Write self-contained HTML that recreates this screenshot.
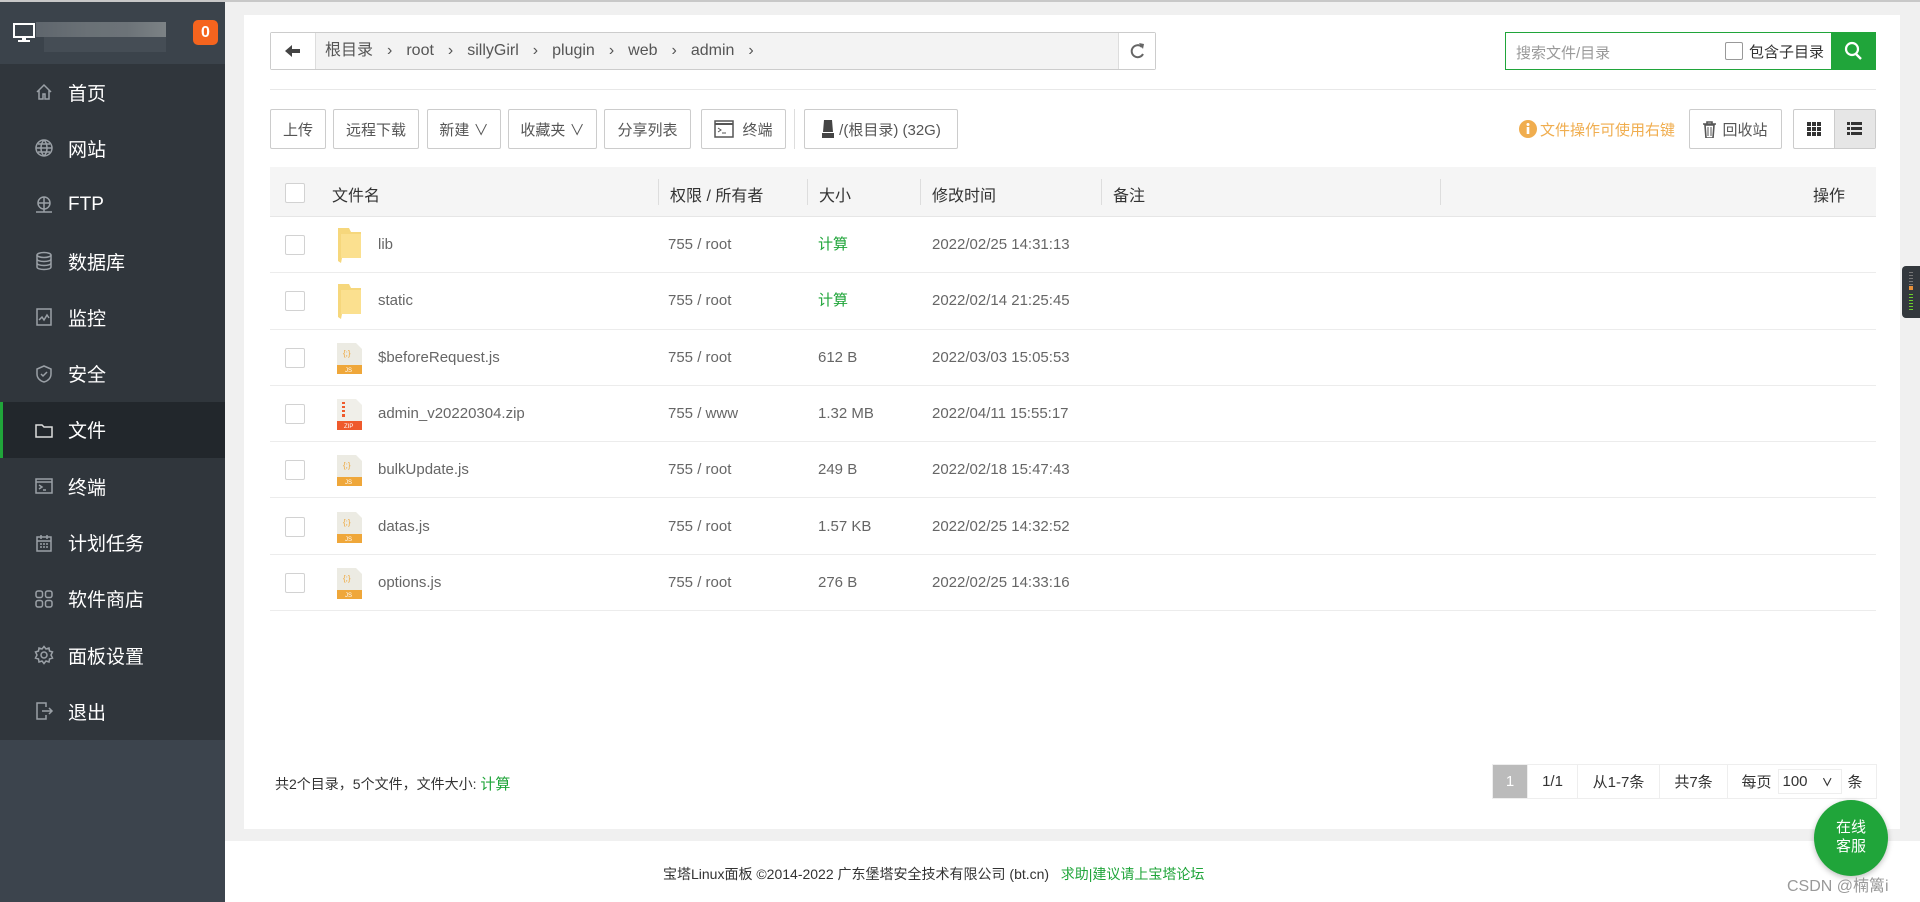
<!DOCTYPE html>
<html><head><meta charset="utf-8"><style>
*{box-sizing:border-box;margin:0;padding:0}
body{width:1920px;height:902px;overflow:hidden;background:#f0f0f0;font-family:"Liberation Sans","Noto Sans CJK SC",sans-serif;color:#555;position:relative}
.topline{position:absolute;left:0;top:0;width:1920px;height:2px;background:#c8c8c8;z-index:5}
.side{position:absolute;left:0;top:0;width:225px;height:902px;background:#3c444d}
.shead{position:absolute;left:0;top:0;width:225px;height:64px;background:#3b434b}
.menu{position:absolute;left:0;top:64px;width:225px;height:676px;background:#30363c}
.mi{height:56.3px;display:flex;align-items:center;padding-left:34px;color:#fff;font-size:19px;position:relative}
.mi svg{width:20px;height:20px;margin-right:14px;stroke:#9aa0a6;fill:none;stroke-width:1.5}
.mi.act{background:#22272c}
.mi.act:before{content:"";position:absolute;left:0;top:0;bottom:0;width:3px;background:#20a53a}
.panel{position:absolute;left:244px;top:15px;width:1656px;height:814px;background:#fff}
.abs{position:absolute}
.bc{left:270px;top:32px;width:886px;height:38px;border:1px solid #ccc;background:#f3f3f3;border-radius:2px}
.bc .back{position:absolute;left:0;top:0;width:45px;height:36px;background:#fff;border-right:1px solid #ddd}
.bc .ref{position:absolute;right:0;top:0;width:37px;height:36px;background:#fff;border-left:1px solid #ddd}
.bc .path{position:absolute;left:54px;top:0;height:36px;line-height:36px;font-size:16px;color:#555;white-space:nowrap}
.bc .path span{margin-right:14px}
.srch{left:1505px;top:32px;width:371px;height:38px;border:1px solid #20a53a}
.btn{position:absolute;top:109px;height:40px;border:1px solid #ccc;border-radius:2px;background:#fff;font-size:15px;color:#555;display:flex;align-items:center;justify-content:center;white-space:nowrap}
.th{left:270px;top:167px;width:1606px;height:50px;background:#f5f5f5;border-bottom:1px solid #e6e6e6}
.th span{position:absolute;top:15px;font-size:16px;color:#333}
.th i{position:absolute;top:12px;width:1px;height:26px;background:#ddd}
.cb{position:absolute;width:20px;height:20px;border:1px solid #d2d2d2;border-radius:2px;background:#fff}
.row{position:absolute;left:270px;width:1606px;height:56.3px;border-bottom:1px solid #ececec;font-size:15px;color:#666}
.row span{position:absolute;top:0;line-height:56px;white-space:nowrap}
.pg{left:1492px;top:764px;height:35px;border:1px solid #eee;display:flex;font-size:15px;color:#333}
.pg div{border-right:1px solid #eee;display:flex;align-items:center;justify-content:center}
</style></head><body>
<div class="topline"></div>
<div class="side">
 <div class="shead">
  <svg class="abs" style="left:13px;top:23px" width="22" height="20" viewBox="0 0 22 20"><rect x="1" y="1" width="20" height="13" fill="none" stroke="#fff" stroke-width="2"/><rect x="9" y="14" width="4" height="3" fill="#fff"/><rect x="5" y="17" width="12" height="2" fill="#fff"/></svg>
  <div class="abs" style="left:36px;top:22px;width:130px;height:15px;background:linear-gradient(90deg,#5f666d,#6a7176 40%,#6c7378 70%,#7c8285)"></div>
  <div class="abs" style="left:44px;top:37px;width:122px;height:15px;background:#454d55"></div>
  <div class="abs" style="left:193px;top:20px;width:25px;height:25px;background:#f5641e;border-radius:5px;color:#fff;font-weight:bold;font-size:16px;text-align:center;line-height:25px">0</div>
 </div>
 <div class="menu">
  <div class="mi"><svg viewBox="0 0 20 20"><path d="M3 10L10 3l7 7M5 8v9h4v-5h2v5h4V8"/></svg>首页</div>
  <div class="mi"><svg viewBox="0 0 20 20"><circle cx="10" cy="10" r="8"/><path d="M2 10h16M10 2c-4 4-4 12 0 16M10 2c4 4 4 12 0 16M4 6h12M4 14h12"/></svg>网站</div>
  <div class="mi"><svg viewBox="0 0 20 20"><circle cx="10" cy="8" r="6"/><path d="M4 8h12M10 2v12M2 17h16M10 14v3"/></svg>FTP</div>
  <div class="mi"><svg viewBox="0 0 20 20"><ellipse cx="10" cy="4" rx="7" ry="2.5"/><path d="M3 4v12c0 1.5 3 2.5 7 2.5s7-1 7-2.5V4M3 8c0 1.5 3 2.5 7 2.5s7-1 7-2.5M3 12c0 1.5 3 2.5 7 2.5s7-1 7-2.5"/></svg>数据库</div>
  <div class="mi"><svg viewBox="0 0 20 20"><rect x="3" y="2" width="14" height="16"/><path d="M5 13l3-3 2 3 3-5 2 3"/></svg>监控</div>
  <div class="mi"><svg viewBox="0 0 20 20"><path d="M10 2l7 3v5c0 4-3 7-7 8-4-1-7-4-7-8V5z"/><path d="M7 10l2 2 4-4"/></svg>安全</div>
  <div class="mi act"><svg viewBox="0 0 20 20" style="stroke:#ddd"><path d="M2 5h6l2 2h8v10H2z"/></svg>文件</div>
  <div class="mi"><svg viewBox="0 0 20 20"><rect x="2" y="3" width="16" height="14"/><path d="M2 6h16M5 9l3 2-3 2M9 14h3"/></svg>终端</div>
  <div class="mi"><svg viewBox="0 0 20 20"><rect x="3" y="4" width="14" height="14"/><path d="M3 8h14M7 2v4M13 2v4M6 11h2M9 11h2M12 11h2M6 14h2M9 14h2M12 14h2"/></svg>计划任务</div>
  <div class="mi"><svg viewBox="0 0 20 20"><rect x="2" y="2" width="6.5" height="6.5" rx="2"/><rect x="11.5" y="2" width="6.5" height="6.5" rx="2"/><rect x="2" y="11.5" width="6.5" height="6.5" rx="2"/><rect x="11.5" y="11.5" width="6.5" height="6.5" rx="2"/></svg>软件商店</div>
  <div class="mi"><svg viewBox="0 0 20 20"><circle cx="10" cy="10" r="3"/><path d="M10 1.5l2 2.5 3-1 .5 3 3 1-1.5 3 1.5 3-3 1-.5 3-3-1-2 2.5-2-2.5-3 1-.5-3-3-1 1.5-3-1.5-3 3-1 .5-3 3 1z"/></svg>面板设置</div>
  <div class="mi"><svg viewBox="0 0 20 20"><path d="M12 6V2H3v16h9v-4M8 10h10M15 7l3 3-3 3"/></svg>退出</div>
 </div>
</div>
<div class="abs" style="left:225px;top:841px;width:1695px;height:61px;background:#fff"></div>
<div class="panel"></div>
<div class="abs bc">
 <div class="back"><svg class="abs" style="left:14px;top:11px" width="16" height="14" viewBox="0 0 16 14"><path d="M0 7l7-6v4h8v4H7v4z" fill="#444"/></svg></div>
 <div class="path"><span>根目录</span><span>›</span><span>root</span><span>›</span><span>sillyGirl</span><span>›</span><span>plugin</span><span>›</span><span>web</span><span>›</span><span>admin</span><span>›</span></div>
 <div class="ref"><svg class="abs" style="left:10px;top:9px" width="17" height="18" viewBox="0 0 17 18"><path d="M13 5A6 6 0 1 0 14 12" fill="none" stroke="#666" stroke-width="2"/><path d="M10 1l5 1-1 5z" fill="#666"/></svg></div>
</div>
<div class="abs srch">
 <span class="abs" style="left:10px;top:9px;font-size:15px;color:#999">搜索文件/目录</span>
 <div class="cb" style="left:219px;top:9px;width:18px;height:18px;border-color:#999"></div>
 <span class="abs" style="left:243px;top:8px;font-size:15px;color:#333">包含子目录</span>
 <div class="abs" style="right:0;top:0;width:44px;height:36px;background:#20a53a"><svg class="abs" style="left:13px;top:8px" width="19" height="20" viewBox="0 0 19 20"><circle cx="8" cy="8" r="6" fill="none" stroke="#fff" stroke-width="2.2"/><path d="M12 13l5 5" stroke="#fff" stroke-width="2.4"/></svg></div>
</div>
<div class="abs" style="left:270px;top:89px;width:1606px;height:1px;background:#e8e8e8"></div>
<div class="btn" style="left:270px;width:56px">上传</div>
<div class="btn" style="left:333px;width:86px">远程下载</div>
<div class="btn" style="left:427px;width:74px">新建 ∨</div>
<div class="btn" style="left:508px;width:89px">收藏夹 ∨</div>
<div class="btn" style="left:604px;width:87px">分享列表</div>
<div class="btn" style="left:701px;width:85px"><svg width="20" height="18" viewBox="0 0 20 18" style="margin-right:8px"><rect x="1" y="1" width="18" height="16" fill="none" stroke="#555" stroke-width="1.5"/><path d="M1 4h18" stroke="#555" stroke-width="2"/><path d="M4 8l3 2-3 2M8 13h4" stroke="#555" fill="none"/></svg>终端</div>
<div class="abs" style="left:794px;top:109px;width:1px;height:40px;background:#ddd"></div>
<div class="btn" style="left:804px;width:154px"><svg width="14" height="18" viewBox="0 0 14 18" style="margin-right:4px"><path d="M3 0h8l1 12H2z M1 13h12v5H1z" fill="#444"/></svg>/(根目录) (32G)</div>
<svg class="abs" style="left:1519px;top:120px" width="18" height="18" viewBox="0 0 18 18"><circle cx="9" cy="9" r="9" fill="#f0ad4e"/><rect x="7.7" y="7" width="2.6" height="7" fill="#fff"/><circle cx="9" cy="4.5" r="1.5" fill="#fff"/></svg>
<span class="abs" style="left:1540px;top:119px;font-size:15px;color:#f0ad4e">文件操作可使用右键</span>
<div class="btn" style="left:1689px;width:93px"><svg width="13" height="17" viewBox="0 0 13 17" style="margin-right:6px"><path d="M0 3h13M4 3V1h5v2M2 4h9l-1 13H3z" fill="none" stroke="#555" stroke-width="1.6"/><path d="M5 6v9M8 6v9" stroke="#555"/></svg>回收站</div>
<div class="btn" style="left:1793px;width:83px;overflow:hidden;justify-content:flex-start">
 <div style="width:41px;height:38px;display:flex;align-items:center;justify-content:center;border-right:1px solid #ccc"><svg width="14" height="14" viewBox="0 0 14 14" fill="#333"><rect x="0" y="0" width="4" height="4"/><rect x="5" y="0" width="4" height="4"/><rect x="10" y="0" width="4" height="4"/><rect x="0" y="5" width="4" height="4"/><rect x="5" y="5" width="4" height="4"/><rect x="10" y="5" width="4" height="4"/><rect x="0" y="10" width="4" height="4"/><rect x="5" y="10" width="4" height="4"/><rect x="10" y="10" width="4" height="4"/></svg></div>
 <div style="width:41px;height:38px;display:flex;align-items:center;justify-content:center;background:#e6e6e6"><svg width="15" height="14" viewBox="0 0 15 14" fill="#333"><rect x="0" y="0" width="3" height="3"/><rect x="4" y="0" width="11" height="3"/><rect x="0" y="5" width="3" height="3"/><rect x="4" y="5" width="11" height="3"/><rect x="0" y="10" width="3" height="3"/><rect x="4" y="10" width="11" height="3"/></svg></div>
</div>
<div class="abs th">
 <div class="cb" style="left:15px;top:16px"></div>
 <span style="left:62px">文件名</span>
 <i style="left:388px"></i><span style="left:400px">权限 / 所有者</span>
 <i style="left:537px"></i><span style="left:549px">大小</span>
 <i style="left:650px"></i><span style="left:662px">修改时间</span>
 <i style="left:831px"></i><span style="left:843px">备注</span>
 <i style="left:1170px"></i><span style="left:1543px">操作</span>
</div>
<div class="row" style="top:217px"><div class="cb" style="left:15px;top:18px"></div><svg class="abs" style="left:67px;top:11px" width="26" height="35" viewBox="0 0 26 35"><path d="M1 0h11l2 4h10v26H5l-1 5L1 33z" fill="#f6d77c"/><path d="M4 6h20v24H4z" fill="#fbe08f"/></svg><span style="left:108px">lib</span><span style="left:398px">755 / root</span><span style="left:548px;color:#20a53a">计算</span><span style="left:662px">2022/02/25 14:31:13</span></div>
<div class="row" style="top:273.3px"><div class="cb" style="left:15px;top:18px"></div><svg class="abs" style="left:67px;top:11px" width="26" height="35" viewBox="0 0 26 35"><path d="M1 0h11l2 4h10v26H5l-1 5L1 33z" fill="#f6d77c"/><path d="M4 6h20v24H4z" fill="#fbe08f"/></svg><span style="left:108px">static</span><span style="left:398px">755 / root</span><span style="left:548px;color:#20a53a">计算</span><span style="left:662px">2022/02/14 21:25:45</span></div>
<div class="row" style="top:329.6px"><div class="cb" style="left:15px;top:18px"></div><svg class="abs" style="left:67px;top:13px" width="25" height="31" viewBox="0 0 25 31"><path d="M0 0h19l6 6v25H0z" fill="#ecebe3"/><rect x="0" y="22" width="25" height="9" fill="#efa73a"/><text x="6" y="13" font-size="8" fill="#efa73a" font-family="Liberation Sans">{;}</text><text x="8" y="29" font-size="6" fill="#fff" font-family="Liberation Sans">JS</text></svg><span style="left:108px">$beforeRequest.js</span><span style="left:398px">755 / root</span><span style="left:548px">612 B</span><span style="left:662px">2022/03/03 15:05:53</span></div>
<div class="row" style="top:385.9px"><div class="cb" style="left:15px;top:18px"></div><svg class="abs" style="left:67px;top:13px" width="25" height="31" viewBox="0 0 25 31"><path d="M0 0h19l6 6v25H0z" fill="#f0efe9"/><rect x="0" y="22" width="25" height="9" fill="#ef5a2c"/><path d="M5 3h3v2H5zM5 7h3v2H5zM5 11h3v2H5zM5 15h3v3H5z" fill="#ef5a2c"/><text x="7" y="29" font-size="6" fill="#fff" font-family="Liberation Sans">ZIP</text></svg><span style="left:108px">admin_v20220304.zip</span><span style="left:398px">755 / www</span><span style="left:548px">1.32 MB</span><span style="left:662px">2022/04/11 15:55:17</span></div>
<div class="row" style="top:442.2px"><div class="cb" style="left:15px;top:18px"></div><svg class="abs" style="left:67px;top:13px" width="25" height="31" viewBox="0 0 25 31"><path d="M0 0h19l6 6v25H0z" fill="#ecebe3"/><rect x="0" y="22" width="25" height="9" fill="#efa73a"/><text x="6" y="13" font-size="8" fill="#efa73a" font-family="Liberation Sans">{;}</text><text x="8" y="29" font-size="6" fill="#fff" font-family="Liberation Sans">JS</text></svg><span style="left:108px">bulkUpdate.js</span><span style="left:398px">755 / root</span><span style="left:548px">249 B</span><span style="left:662px">2022/02/18 15:47:43</span></div>
<div class="row" style="top:498.5px"><div class="cb" style="left:15px;top:18px"></div><svg class="abs" style="left:67px;top:13px" width="25" height="31" viewBox="0 0 25 31"><path d="M0 0h19l6 6v25H0z" fill="#ecebe3"/><rect x="0" y="22" width="25" height="9" fill="#efa73a"/><text x="6" y="13" font-size="8" fill="#efa73a" font-family="Liberation Sans">{;}</text><text x="8" y="29" font-size="6" fill="#fff" font-family="Liberation Sans">JS</text></svg><span style="left:108px">datas.js</span><span style="left:398px">755 / root</span><span style="left:548px">1.57 KB</span><span style="left:662px">2022/02/25 14:32:52</span></div>
<div class="row" style="top:554.8px"><div class="cb" style="left:15px;top:18px"></div><svg class="abs" style="left:67px;top:13px" width="25" height="31" viewBox="0 0 25 31"><path d="M0 0h19l6 6v25H0z" fill="#ecebe3"/><rect x="0" y="22" width="25" height="9" fill="#efa73a"/><text x="6" y="13" font-size="8" fill="#efa73a" font-family="Liberation Sans">{;}</text><text x="8" y="29" font-size="6" fill="#fff" font-family="Liberation Sans">JS</text></svg><span style="left:108px">options.js</span><span style="left:398px">755 / root</span><span style="left:548px">276 B</span><span style="left:662px">2022/02/25 14:33:16</span></div>
<span class="abs" style="left:275px;top:773px;font-size:14px;color:#333">共2个目录，5个文件，文件大小: <span style="color:#20a53a;font-size:15px">计算</span></span>
<div class="abs pg">
 <div style="width:35px;background:#bbb;color:#fff">1</div>
 <div style="width:50px">1/1</div>
 <div style="width:82px">从1-7条</div>
 <div style="width:68px">共7条</div>
 <div style="width:148px;border-right:none">每页 <span style="border:1px solid #eee;margin:0 6px;padding:3px 4px;width:64px;display:inline-block">100 <b style="font-size:11px;margin-left:10px">∨</b></span> 条</div>
</div>
<div class="abs" style="left:1814px;top:800px;width:74px;height:76px;border-radius:50%;background:#20a53a;color:#fff;font-size:15px;text-align:center;padding-top:18px;line-height:19px;box-shadow:0 2px 6px rgba(0,0,0,.25)">在线<br>客服</div>
<span class="abs" style="left:663px;top:864px;font-size:14px;color:#333;white-space:nowrap">宝塔Linux面板 ©2014-2022 广东堡塔安全技术有限公司 (bt.cn)&nbsp;&nbsp; <span style="color:#20a53a">求助|建议请上宝塔论坛</span></span>
<span class="abs" style="left:1787px;top:872px;font-size:16px;color:#999;white-space:nowrap">CSDN @楠篱i</span>
<div class="abs" style="left:1902px;top:266px;width:18px;height:52px;background:#33383d;border-radius:4px 0 0 4px"><div class="abs" style="left:7px;top:6px;width:4px;height:14px;background:repeating-linear-gradient(#777 0 1px,transparent 1px 3px)"></div><div class="abs" style="left:7px;top:20px;width:4px;height:4px;background:#e8913a"></div><div class="abs" style="left:7px;top:28px;width:4px;height:18px;background:repeating-linear-gradient(#6ccf2c 0 1px,transparent 1px 3px)"></div></div>
</body></html>
